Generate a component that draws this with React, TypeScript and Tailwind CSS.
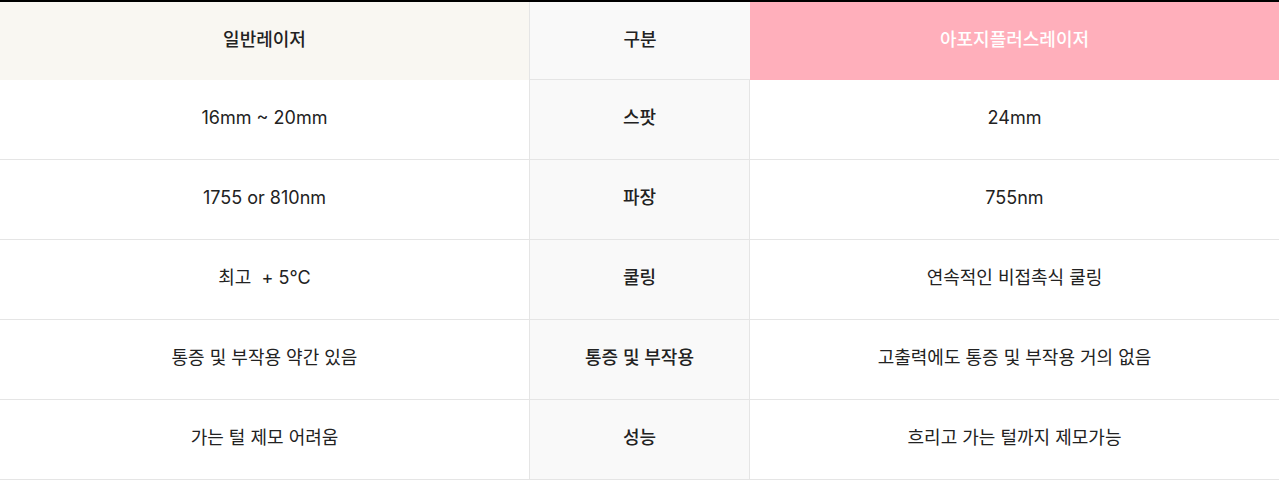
import React from 'react';

type Row = { normal: string; label: string; apogee: string };

const rows: Row[] = [
  { normal: '16mm ~ 20mm', label: '스팟', apogee: '24mm' },
  { normal: '1755 or 810nm', label: '파장', apogee: '755nm' },
  { normal: '최고  + 5°C', label: '쿨링', apogee: '연속적인 비접촉식 쿨링' },
  { normal: '통증 및 부작용 약간 있음', label: '통증 및 부작용', apogee: '고출력에도 통증 및 부작용 거의 없음' },
  { normal: '가는 털 제모 어려움', label: '성능', apogee: '흐리고 가는 털까지 제모가능' },
];

const App: React.FC = () => {
  return (
    <div
      className="w-[1279px] bg-white text-[18px] text-[#222]"
      style={{ fontFamily: 'Inter, "Noto Sans CJK KR", sans-serif' }}
    >
      <div className="border-t-2 border-black">
        {/* HEADER */}
        <div className="grid grid-cols-[529px_221px_1fr] h-[78px]">
          <div className="flex items-center justify-center bg-[#f9f7f2] font-medium pb-[3px]">일반레이저</div>
          <div className="flex items-center justify-center bg-[#f9f9f9] border-l border-b border-[#e5e5e5] font-medium pb-[3px]">구분</div>
          <div className="flex items-center justify-center bg-[#ffafbb] text-white font-medium pb-[3px]">아포지플러스레이저</div>
        </div>

        {/* ROWS */}
        {rows.map((r, i) => (
          <div
            key={i}
            className="grid grid-cols-[529px_221px_1fr] h-[80px] border-b border-[#e5e5e5]"
          >
            <div className="flex items-center justify-center whitespace-pre pb-[5px]">{r.normal}</div>
            <div className="flex items-center justify-center bg-[#f9f9f9] border-l border-r border-[#e5e5e5] font-medium pb-[5px]">
              {r.label}
            </div>
            <div className="flex items-center justify-center pb-[5px]">{r.apogee}</div>
          </div>
        ))}
      </div>
    </div>
  );
};

export default App;
